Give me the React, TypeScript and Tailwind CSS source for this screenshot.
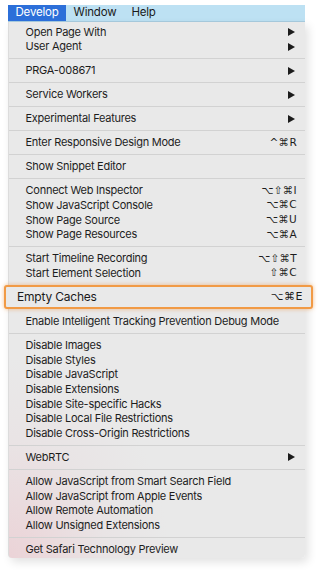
import React from 'react';

type Item = { label: string; shortcut?: string; arrow?: boolean; special?: boolean };

const groups: Item[][] = [
    [
        { label: 'Open Page With', arrow: true },
        { label: 'User Agent', arrow: true },
    ],
    [{ label: 'PRGA-008671', arrow: true }],
    [{ label: 'Service Workers', arrow: true }],
    [{ label: 'Experimental Features', arrow: true }],
    [{ label: 'Enter Responsive Design Mode', shortcut: '^⌘R' }],
    [{ label: 'Show Snippet Editor' }],
    [
        { label: 'Connect Web Inspector', shortcut: '⌥⇧⌘I' },
        { label: 'Show JavaScript Console', shortcut: '⌥⌘C' },
        { label: 'Show Page Source', shortcut: '⌥⌘U' },
        { label: 'Show Page Resources', shortcut: '⌥⌘A' },
    ],
    [
        { label: 'Start Timeline Recording', shortcut: '⌥⇧⌘T' },
        { label: 'Start Element Selection', shortcut: '⇧⌘C' },
    ],
    [{ label: 'Empty Caches', shortcut: '⌥⌘E', special: true }],
    [{ label: 'Enable Intelligent Tracking Prevention Debug Mode' }],
    [
        { label: 'Disable Images' },
        { label: 'Disable Styles' },
        { label: 'Disable JavaScript' },
        { label: 'Disable Extensions' },
        { label: 'Disable Site-specific Hacks' },
        { label: 'Disable Local File Restrictions' },
        { label: 'Disable Cross-Origin Restrictions' },
    ],
    [{ label: 'WebRTC', arrow: true }],
    [
        { label: 'Allow JavaScript from Smart Search Field' },
        { label: 'Allow JavaScript from Apple Events' },
        { label: 'Allow Remote Automation' },
        { label: 'Allow Unsigned Extensions' },
    ],
    [{ label: 'Get Safari Technology Preview' }],
];

function Arrow() {
    return (
        <svg width="7" height="8" viewBox="0 0 7 8" className="shrink-0">
            <polygon points="0,0 7,4 0,8" fill="#1c1c1c" />
        </svg>
    );
}

function Separator() {
    return (
        <div className="h-[9.3px] flex items-center">
            <div className="h-px w-full bg-[#d2d2d2]" />
        </div>
    );
}

function Row({ item }: { item: Item }) {
    return (
        <div className="h-[14.7px] flex items-center justify-between pl-[16.5px] pr-[8px] text-[11px] tracking-[-0.25px] text-[#1d1d1d] whitespace-nowrap">
            <span>{item.label}</span>
            {item.shortcut && (
                <span className="tracking-[0.3px] font-['DejaVu_Sans',sans-serif] text-[10.5px]">{item.shortcut}</span>
            )}
            {item.arrow && (
                <span className="pr-[2px]">
                    <Arrow />
                </span>
            )}
        </div>
    );
}

function EmptyCaches({ item }: { item: Item }) {
    return (
        <>
            <div className="h-[4.65px]" />
            <div className="h-[24px] ml-[-5px] mr-[-8px] relative z-10 flex items-center justify-between pl-[11px] pr-[8px] border-2 border-[#f19a45] rounded-[3px] bg-[#e9e9e9] shadow-[0_0_4px_rgba(241,140,50,0.55)] text-[12px] tracking-[-0.2px] text-[#1a1a1a] whitespace-nowrap">
                <span>{item.label}</span>
                <span className="tracking-[0.5px] font-['DejaVu_Sans',sans-serif] text-[11px]">{item.shortcut}</span>
            </div>
            <div className="h-[4.65px]" />
        </>
    );
}

export default function App() {
    return (
        <div className="w-[322px] h-[575px] bg-white overflow-hidden font-['Inter','Noto_Sans',sans-serif]">
            <div className="pt-[5px] pl-[8px] w-[305px]">
                {/* menu bar */}
                <div className="h-[17px] bg-[#bde1f3] flex items-stretch text-[11.5px] tracking-[-0.2px] text-[#1a1a1a] border-b border-[#a9cde0]">
                    <div className="bg-[#2c6fd9] text-white px-[7.5px] flex items-center">Develop</div>
                    <div className="px-[7.5px] flex items-center">Window</div>
                    <div className="px-[7.5px] flex items-center">Help</div>
                </div>
                {/* dropdown */}
                <div className="pt-[2.6px] pb-[1.5px] bg-[radial-gradient(ellipse_160px_200px_at_0%_100%,#ebd3d7_0%,#e9e4e5_60%,#e9e9e9_100%)] shadow-[3px_4px_10px_rgba(0,0,0,0.12)] border-l border-[#dcdcdc] rounded-b-[4px]">
                    {groups.map((group, gi) => {
                        const special = group[0].special;
                        const prevSpecial = gi > 0 && groups[gi - 1][0].special;
                        return (
                            <React.Fragment key={gi}>
                                {gi > 0 && !special && !prevSpecial && <Separator />}
                                {special ? (
                                    <EmptyCaches item={group[0]} />
                                ) : (
                                    group.map((item) => <Row key={item.label} item={item} />)
                                )}
                            </React.Fragment>
                        );
                    })}
                </div>
            </div>
        </div>
    );
}
